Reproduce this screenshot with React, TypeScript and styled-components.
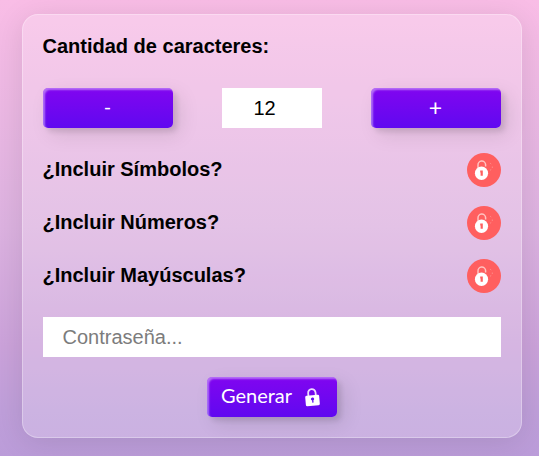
import React, { useState } from "react";
import styled, { createGlobalStyle } from "styled-components";

const GlobalStyle = createGlobalStyle`
  * { box-sizing: border-box; }
  html, body { margin: 0; height: 100%; }
  body { overflow: hidden; font-family: "Liberation Sans", Arial, sans-serif; }
`;

const Page = styled.main`
  height: 456px;
  padding: 14px 17px 18px 22px;
  background: linear-gradient(180deg, #f9bde6 0%, #dcb2e0 50%, #cba2da 76%, #bf9fda 90%, #bb9cd9 100%);
`;

const Card = styled.section`
  width: 500px;
  height: 424px;
  padding: 19px 20px;
  display: flex;
  flex-direction: column;
  border: 1px solid rgba(255, 255, 255, 0.3);
  border-radius: 16px;
  background: rgba(255, 255, 255, 0.21);
  box-shadow: 0 4px 30px rgba(0, 0, 0, 0.1);
`;

const Label = styled.h2`
  margin: 0 0 0 -0.5px;
  font-size: 20px;
  line-height: 24px;
  font-weight: 700;
  color: #000;
`;

const Counter = styled.div`
  display: flex;
  justify-content: space-between;
  margin-top: 30px;
`;

const Button = styled.button`
  width: 130px;
  height: 40px;
  padding: 0 1px 4px 0;
  display: flex;
  align-items: center;
  justify-content: center;
  gap: 10px;
  border: 0;
  border-radius: 5px;
  background: linear-gradient(0deg, #6009f0 0%, #8105f0 100%);
  box-shadow: inset 2px 2px 2px 0 rgba(255, 255, 255, 0.42),
    7px 7px 20px 0 rgba(0, 0, 0, 0.1), 4px 4px 5px 0 rgba(0, 0, 0, 0.1);
  color: #fff;
  font-family: Lato, sans-serif;
  font-size: 20px;
  line-height: 24px;
  font-weight: 400;
`;

const PlusButton = styled(Button)`
  padding-bottom: 2px;
  font-size: 23px;
`;

const Field = styled.input<{ $size: "small" | "full" }>`
  width: ${(p) => (p.$size === "small" ? "100px" : "100%")};
  height: 40px;
  padding: ${(p) => (p.$size === "small" ? "0 15px 0 0" : "0 19.5px")};
  text-align: ${(p) => (p.$size === "small" ? "center" : "left")};
  border: 0;
  border-radius: 0;
  background: #fff;
  color: #000;
  font: 20px "Liberation Sans", Arial, sans-serif;
  &::placeholder { color: #7c7c7c; }
`;

const Options = styled.div`
  display: flex;
  flex-direction: column;
  gap: 19px;
  margin: 25px 0 24px;
`;

const Option = styled.div`
  display: flex;
  align-items: flex-start;
  justify-content: space-between;
  height: 34px;
  ${Label} { padding-top: 4px; }
`;

const Toggle = styled.button`
  width: 34px;
  height: 34px;
  padding: 0;
  border: 0;
  border-radius: 50%;
  background: #ff5f5f;
  svg { display: block; }
`;

const GenerateButton = styled(Button)`
  align-self: center;
  margin-top: 20px;
  padding: 0 0 4px 1px;
  svg { margin-top: 4px; }
`;

const OpenLock = () => (
  <svg width="34" height="34" viewBox="0 0 34 34" fill="none">
    <path d="M11 15V12.2A3.8 3.8 0 0 1 18.6 11.6V13.5" stroke="#ffc5c2" strokeWidth="1.5" />
    <ellipse cx="14.5" cy="20.2" rx="6.6" ry="6.8" fill="#fff" />
    <path d="M13.2 17.6H15.8V22.8H13.6V19.6H13.2Z" fill="#ff5f5f" />
    <path d="M23.3 10.3L24.2 11M25.3 13.6V14.8M23.2 17.2L24.2 16.5" stroke="#ff9994" strokeWidth="0.9" />
  </svg>
);

const ClosedLock = () => (
  <svg width="22" height="22" viewBox="0 0 22 22" fill="none">
    <g transform="translate(-0.7 0) rotate(-5 11 12)">
      <path d="M7.3 10V6.8a3.7 3.7 0 0 1 7.4 0V10" stroke="#eedcff" strokeWidth="1.8" />
      <rect x="4" y="9.2" width="14" height="10.6" rx="1.4" fill="#fff" />
      <path d="M9.5 12.8a1.7 1.7 0 0 1 3.3 0c0 .8-.5 1.2-.9 1.5v2.4h-1.3v-2.4c-.5-.3-1.1-.7-1.1-1.5Z" fill="#6009f0" />
    </g>
  </svg>
);

const options = ["¿Incluir Símbolos?", "¿Incluir Números?", "¿Incluir Mayúsculas?"];

export default function App() {
  const [length, setLength] = useState(12);
  return (
    <>
      <GlobalStyle />
      <Page>
        <Card>
          <Label>Cantidad de caracteres:</Label>
          <Counter>
            <Button onClick={() => setLength(length - 1)}>-</Button>
            <Field $size="small" value={length} readOnly />
            <PlusButton onClick={() => setLength(length + 1)}>+</PlusButton>
          </Counter>
          <Options>
            {options.map((text) => (
              <Option key={text}>
                <Label>{text}</Label>
                <Toggle aria-label={text}><OpenLock /></Toggle>
              </Option>
            ))}
          </Options>
          <Field $size="full" placeholder="Contraseña..." readOnly />
          <GenerateButton>Generar<ClosedLock /></GenerateButton>
        </Card>
      </Page>
    </>
  );
}
